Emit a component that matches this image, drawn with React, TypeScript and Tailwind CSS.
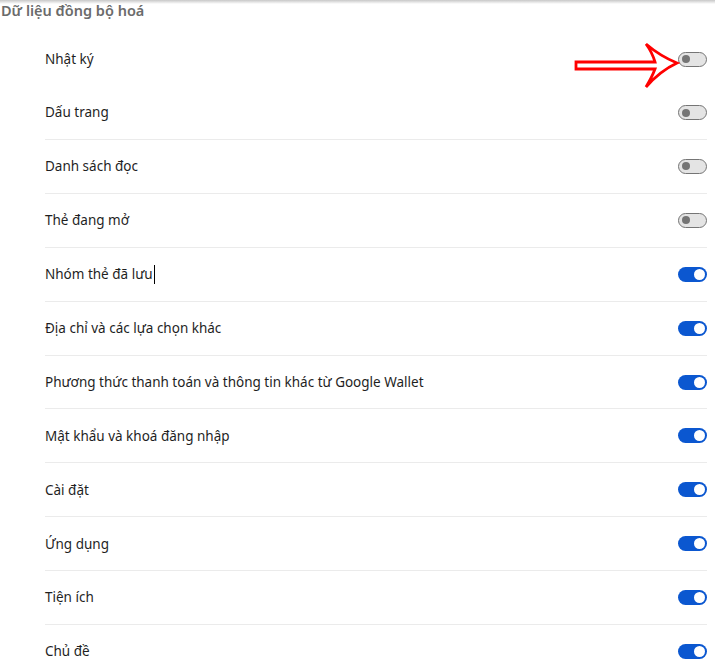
const ITEMS = [
  { label: 'Nhật ký', on: false, border: false },
  { label: 'Dấu trang', on: false, border: false },
  { label: 'Danh sách đọc', on: false, border: true },
  { label: 'Thẻ đang mở', on: false, border: true },
  { label: 'Nhóm thẻ đã lưu', on: true, border: true, caret: true },
  { label: 'Địa chỉ và các lựa chọn khác', on: true, border: true },
  { label: 'Phương thức thanh toán và thông tin khác từ Google Wallet', on: true, border: true },
  { label: 'Mật khẩu và khoá đăng nhập', on: true, border: true },
  { label: 'Cài đặt', on: true, border: true },
  { label: 'Ứng dụng', on: true, border: true },
  { label: 'Tiện ích', on: true, border: true },
  { label: 'Chủ đề', on: true, border: true },
];

function Toggle({ on }: { on: boolean }) {
  if (on) {
    return (
      <span className="flex h-[15px] w-[29px] items-center justify-end rounded-full bg-[#0b57d0] pr-[2px]">
        <span className="h-[11px] w-[11px] rounded-full bg-white" />
      </span>
    );
  }
  return (
    <span className="flex h-[15px] w-[29px] items-center rounded-full border border-[#757575] bg-[#e4e4e4] pl-[3px]">
      <span className="h-[8px] w-[8px] rounded-full bg-[#757575]" />
    </span>
  );
}

function Arrow() {
  return (
    <svg className="absolute left-[570px] top-[40px]" width="112" height="52" viewBox="570 40 112 52">
      <path
        d="M576,62 L655,62 Q652,52 646,44 Q660,56 677,63 Q660,71 646,87 Q652,77 655,69 L576,69 Z"
        fill="white"
        stroke="#ff0000"
        strokeWidth="2.8"
        strokeLinejoin="miter"
      />
    </svg>
  );
}

export default function App() {
  return (
    <div
      className="relative h-[659px] w-[715px] overflow-hidden bg-white"
      style={{ fontFamily: '"Noto Sans", "Open Sans", sans-serif' }}
    >
      <div className="absolute left-0 right-0 top-0 h-[4px] bg-gradient-to-b from-[#c8c8c8] to-white" />
      <div className="h-[32px] pl-[1px] text-[14.5px] font-semibold leading-[20px] text-[#6b6b6b]">
        Dữ liệu đồng bộ hoá
      </div>
      <div className="ml-[45px] mr-[8px]">
        {ITEMS.map((it, i) => (
          <div
            key={it.label}
            className={`flex items-center justify-between ${i === 0 ? 'h-[54px]' : i === 1 ? 'h-[53px]' : 'h-[53.9px]'} ${
              it.border ? 'border-t border-[#ebebeb]' : ''
            }`}
          >
            <span className="flex items-center text-[13.5px] text-[#1f1f1f]">
              {it.label}
              {it.caret && <span className="ml-[1px] inline-block h-[19px] w-[1px] bg-black" />}
            </span>
            <Toggle on={it.on} />
          </div>
        ))}
      </div>
      <Arrow />
    </div>
  );
}
